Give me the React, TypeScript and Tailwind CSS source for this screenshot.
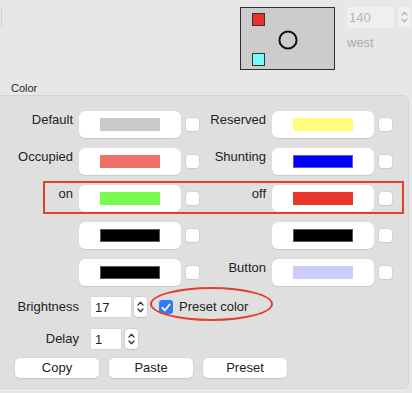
import React from 'react';

type ColorRow = {
  label: string;
  color: string;
  edge: string;
};

const leftRows: ColorRow[] = [
  { label: 'Default', color: '#c9c9c9', edge: '#c9c9c9' },
  { label: 'Occupied', color: '#ef6f69', edge: '#ef6f69' },
  { label: 'on', color: '#79fb50', edge: '#79fb50' },
  { label: '', color: '#000000', edge: '#5a5a5a' },
  { label: '', color: '#000000', edge: '#5a5a5a' },
];

const rightRows: ColorRow[] = [
  { label: 'Reserved', color: '#fffd7b', edge: '#fffd7b' },
  { label: 'Shunting', color: '#0000f5', edge: '#5a5af0' },
  { label: 'off', color: '#e9362b', edge: '#e9362b' },
  { label: '', color: '#000000', edge: '#5a5a5a' },
  { label: 'Button', color: '#cdcdfb', edge: '#cdcdfb' },
];

function Stepper({ dim = false }: { dim?: boolean }) {
  const stroke = dim ? '#b8b8b8' : '#3a3a3a';
  return (
    <div className={`w-[13px] h-[20px] rounded-[4px] flex flex-col items-center justify-center gap-[2px] ${dim ? 'bg-[#f0f0f0]' : 'bg-white shadow-[0_0_0_0.5px_#c4c4c4,0_1px_1px_rgba(0,0,0,0.12)]'}`}>
      <svg width="7" height="5" viewBox="0 0 7 5">
        <path d="M1 4 L3.5 1.2 L6 4" fill="none" stroke={stroke} strokeWidth="1.3" strokeLinecap="round" strokeLinejoin="round" />
      </svg>
      <svg width="7" height="5" viewBox="0 0 7 5">
        <path d="M1 1 L3.5 3.8 L6 1" fill="none" stroke={stroke} strokeWidth="1.3" strokeLinecap="round" strokeLinejoin="round" />
      </svg>
    </div>
  );
}

function Check() {
  return <div className="w-[13px] h-[13px] rounded-[3px] bg-white shadow-[0_0_0_0.5px_#c8c8c8,0_1px_1px_rgba(0,0,0,0.08)]" />;
}

function Well({ row, labelWidth }: { row: ColorRow; labelWidth: string }) {
  return (
    <div className="flex items-start h-[27px]">
      <div className={`${labelWidth} text-right pt-px leading-[16px]`}>{row.label}</div>
      <div className="ml-[6px] w-[102px] h-[27px] rounded-[6px] bg-white flex items-center justify-center shadow-[0_0.5px_1px_rgba(0,0,0,0.1)]">
        <div className="w-[60px] h-[13px] border" style={{ backgroundColor: row.color, borderColor: row.edge }} />
      </div>
      <div className="ml-[5px] h-[27px] flex items-center">
        <Check />
      </div>
    </div>
  );
}

function PushButton({ label }: { label: string }) {
  return (
    <button className="w-[84px] h-[20px] rounded-[5px] bg-white text-[13px] leading-[20px] text-[#222] shadow-[0_0_0_0.5px_#cfcfcf,0_1px_1.5px_rgba(0,0,0,0.15)]">
      {label}
    </button>
  );
}

export default function App() {
  return (
    <div
      className="relative w-[412px] h-[393px] overflow-hidden bg-[#e7e7e7] text-[13px] text-[#222]"
      style={{ fontFamily: '"Liberation Sans", Arial, sans-serif' }}
    >
      {/* top: track preview + direction */}
      <div className="flex h-[81px]">
        <div className="ml-px mt-[8px] w-px h-[19px] bg-[#d2d2d2]" />
        <div className="ml-[238px] mt-[7px] w-[95px] h-[63px] border border-[#2e2e2e] bg-[#cccccc]">
          <svg width="93" height="61" viewBox="0 0 93 61">
            <rect x="11.5" y="5.5" width="12" height="12" fill="#ec3127" stroke="#333" strokeWidth="1" />
            <rect x="11.5" y="45.5" width="12" height="12" fill="#74fbfd" stroke="#333" strokeWidth="1" />
            <circle cx="47" cy="32" r="8.6" fill="none" stroke="#111" strokeWidth="2" />
          </svg>
        </div>
        <div className="ml-[12px] mt-[7px] flex flex-col">
          <div className="flex items-start">
            <div className="w-[47px] h-[21px] bg-[#efefef] pl-[2px] leading-[21px] text-[#b4b4b4]">140</div>
            <div className="ml-[4px]">
              <Stepper dim />
            </div>
          </div>
          <div className="mt-[7px] leading-[16px] text-[#ababab]">west</div>
        </div>
      </div>

      <div className="pl-[11px] h-[14px] text-[11px] leading-[14px] text-[#262626]">Color</div>

      {/* color panel */}
      <div className="w-[409px] h-[294px] bg-[#dfdfdf] border border-l-0 border-[#d4d4d4] rounded-r-[6px] pt-[15px]">
        <div className="flex">
          <div className="flex flex-col gap-[10px]">
            {leftRows.map((row, i) => (
              <Well key={i} row={row} labelWidth="w-[73px]" />
            ))}
          </div>
          <div className="flex flex-col gap-[10px]">
            {rightRows.map((row, i) => (
              <Well key={i} row={row} labelWidth="w-[67px]" />
            ))}
          </div>
        </div>

        <div className="mt-[11px] flex items-center h-[20px]">
          <div className="w-[79px] text-right leading-[16px]">Brightness</div>
          <div className="ml-[12px] w-[40px] h-[20px] bg-white pl-[4px] leading-[21px] shadow-[0_0_0_0.5px_#cfcfcf]">17</div>
          <div className="ml-[3px]">
            <Stepper />
          </div>
          <div className="ml-[12px] w-[14px] h-[14px] rounded-[3px] bg-[#2f7cf6] flex items-center justify-center">
            <svg width="10" height="9" viewBox="0 0 10 9">
              <path d="M1.5 4.8 L4 7.3 L8.6 1.5" fill="none" stroke="#fff" strokeWidth="1.8" strokeLinecap="round" strokeLinejoin="round" />
            </svg>
          </div>
          <div className="ml-[6px] leading-[16px]">Preset color</div>
        </div>

        <div className="mt-[12px] flex items-center h-[20px]">
          <div className="w-[79px] text-right leading-[16px]">Delay</div>
          <div className="ml-[12px] w-[30px] h-[20px] bg-white pl-[4px] leading-[21px] shadow-[0_0_0_0.5px_#cfcfcf]">1</div>
          <div className="ml-[4px]">
            <Stepper />
          </div>
        </div>

        <div className="mt-[9px] pl-[15px] flex gap-[10px]">
          <PushButton label="Copy" />
          <PushButton label="Paste" />
          <PushButton label="Preset" />
        </div>
      </div>

      {/* annotations */}
      <div className="absolute left-[43px] top-[181px] w-[361px] h-[33px] border-2 border-[#e2402d]" />
      <div className="absolute left-[150px] top-[287px] w-[123px] h-[34px] rounded-[50%] border-2 border-[#e2402d]" />
    </div>
  );
}
